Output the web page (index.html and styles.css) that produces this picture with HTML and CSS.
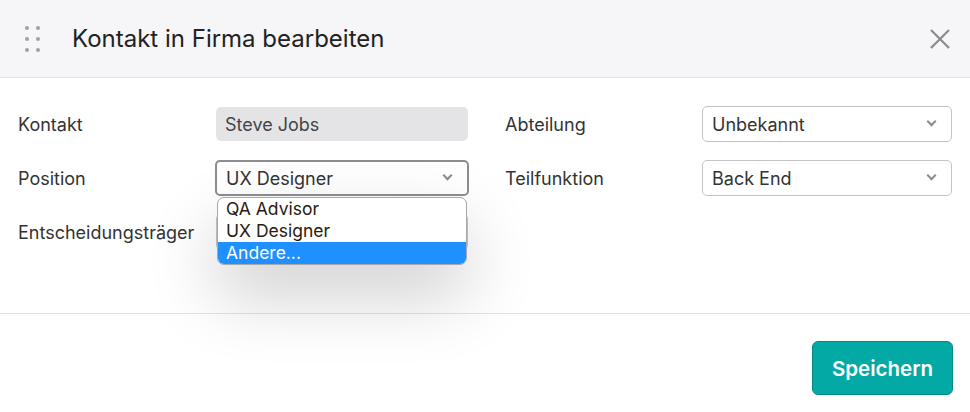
FILE: index.html
```html
<!DOCTYPE html>
<html lang="de">
<head>
    <meta charset="UTF-8">
    <meta name="viewport" content="width=device-width, initial-scale=1.0">
    <title>Kontakt in Firma bearbeiten</title>
    <link rel="stylesheet" href="styles.css">
</head>
<body>
    <div class="modal">
        <header class="modal-header">
            <span class="drag-handle">
                <i></i><i></i><i></i><i></i><i></i><i></i>
            </span>
            <h1>Kontakt in Firma bearbeiten</h1>
            <button class="close" type="button" aria-label="Schließen">
                <svg width="20" height="20" viewBox="0 0 20 20">
                    <path d="M1 1 L19 19 M19 1 L1 19" stroke="#8a8a90" stroke-width="2.2" fill="none"/>
                </svg>
            </button>
        </header>

        <form class="modal-body">
            <label class="label">Kontakt</label>
            <div class="field readonly">Steve Jobs</div>
            <label class="label">Abteilung</label>
            <div class="field select">Unbekannt<span class="chevron"></span></div>

            <label class="label">Position</label>
            <div class="select-wrap">
                <div class="field select focused">UX Designer<span class="chevron"></span></div>
                <ul class="dropdown">
                    <li>QA Advisor</li>
                    <li>UX Designer</li>
                    <li class="active">Andere...</li>
                </ul>
            </div>
            <label class="label">Teilfunktion</label>
            <div class="field select">Back End<span class="chevron"></span></div>

            <label class="label">Entscheidungsträger</label>
            <div class="field select"><span class="chevron"></span></div>
        </form>

        <footer class="modal-footer">
            <button class="save" type="button">Speichern</button>
        </footer>
    </div>
</body>
</html>
```

FILE: styles.css
```css
* {
    box-sizing: border-box;
}
body {
    margin: 0;
    font-family: Inter, "Noto Sans", sans-serif;
    color: #333;
    background: #fff;
}
.modal {
    width: 970px;
    height: 412px;
    display: flex;
    flex-direction: column;
}
.modal-header {
    height: 78px;
    background: #f6f6f8;
    border-bottom: 1px solid #e2e2e4;
    display: flex;
    align-items: center;
    padding: 0 20px 0 25px;
}
.drag-handle {
    display: grid;
    grid-template-columns: 4px 4px;
    column-gap: 7px;
    row-gap: 7px;
    width: 15px;
    margin-right: 32px;
}
.drag-handle i {
    width: 4px;
    height: 4px;
    border-radius: 50%;
    background: #a0a0a6;
}
.modal-header h1 {
    flex: 1;
    margin: 0;
    font-size: 24px;
    font-weight: 400;
    color: #222;
}
.close {
    background: none;
    border: none;
    padding: 0;
    width: 20px;
    height: 20px;
    display: flex;
}
.modal-body {
    display: grid;
    grid-template-columns: 198px 252px 37px 197px 250px;
    grid-auto-rows: 36px;
    row-gap: 18px;
    align-items: center;
    padding: 28px 18px 0 18px;
    height: 236px;
    border-bottom: 1px solid #e2e2e4;
    margin: 0;
}
.modal-body .label:nth-child(3),
.modal-body .label:nth-child(7) {
    grid-column: 4;
}
.label {
    font-size: 18px;
    color: #333;
}
.field {
    height: 36px;
    display: flex;
    align-items: center;
    padding: 0 9px;
    font-size: 18px;
    color: #333;
    border-radius: 5px;
    position: relative;
}
.readonly {
    background: #e4e4e7;
    height: 34px;
    color: #444;
}
.select {
    border: 1px solid #c4c4c8;
    background: #fff;
}
.focused {
    border: 2px solid #8e8e92;
    padding-left: 9px;
    margin: 0 -1px;
}
.chevron {
    position: absolute;
    right: 16px;
    top: 50%;
    width: 7px;
    height: 7px;
    margin-top: -6px;
    border-right: 2px solid #8a8a90;
    border-bottom: 2px solid #8a8a90;
    transform: rotate(45deg);
}
.select-wrap {
    position: relative;
    height: 36px;
    z-index: 2;
}
.dropdown {
    position: absolute;
    left: 1px;
    top: 37px;
    width: 250px;
    margin: 0;
    padding: 0;
    list-style: none;
    background: #fff;
    border: 1px solid #a8a8ac;
    border-radius: 7px;
    overflow: hidden;
    box-shadow: 0 30px 70px rgba(0, 0, 0, 0.2);
}
.dropdown li {
    height: 22px;
    line-height: 22px;
    padding: 0 8px;
    font-size: 17.5px;
    color: #2a1a10;
}
.dropdown li.active {
    background: #1e90ff;
    color: #fff;
}
.modal-footer {
    flex: 1;
    display: flex;
    justify-content: flex-end;
    align-items: flex-start;
    padding: 27px 17px 0 0;
}
.save {
    width: 141px;
    height: 54px;
    background: #03a9a5;
    border: 1px solid #078a87;
    border-radius: 6px;
    color: #fff;
    font-family: Inter, "Noto Sans", sans-serif;
    font-size: 20.5px;
    font-weight: 600;
}
```
